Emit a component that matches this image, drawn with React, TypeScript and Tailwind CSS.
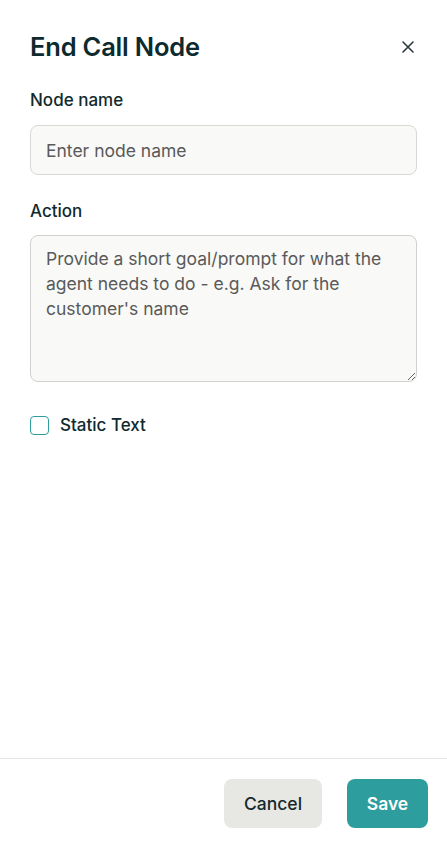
import React from "react";

export default function App() {
  return (
    <div
      className="h-[845px] w-[447px] bg-white flex flex-col text-[#0f2a2e]"
      style={{ fontFamily: "Inter, 'Noto Sans', sans-serif" }}
    >
      <div className="flex-1 px-[30px] pt-[31px]">
        <div className="flex items-center justify-between">
          <h1 className="text-[25.5px] leading-[32px] font-semibold tracking-[-0.2px] text-[#0d2a2e]">End Call Node</h1>
          <button className="mr-[2px] text-[#2a3a3c]">
            <svg width="14" height="14" viewBox="0 0 14 14" fill="none" stroke="currentColor" strokeWidth="1.6" strokeLinecap="round">
              <path d="M2 2 L12 12 M12 2 L2 12" />
            </svg>
          </button>
        </div>

        <label className="block mt-[25px] text-[17px] leading-[24px] font-medium">Node name</label>
        <input
          placeholder="Enter node name"
          className="mt-[13px] w-full h-[50px] rounded-[8px] border border-[#d8d8d4] bg-[#f9f9f7] px-[15px] text-[17.5px] placeholder:text-[#5a5a5a] outline-none"
        />

        <label className="block mt-[24px] text-[17px] leading-[24px] font-medium">Action</label>
        <textarea
          placeholder="Provide a short goal/prompt for what the agent needs to do - e.g. Ask for the customer's name"
          className="mt-[12px] w-full h-[147px] rounded-[8px] border border-[#d0d0cc] bg-[#f9f9f7] px-[15px] py-[10px] text-[17.5px] leading-[25px] placeholder:text-[#5a5a5a] outline-none resize-y block"
        />

        <div className="mt-[31px] flex items-center gap-[11px]">
          <span className="w-[19px] h-[19px] rounded-[4px] border-[1.5px] border-[#2d9d9d] bg-white" />
          <span className="text-[17px] leading-[24px] font-medium">Static Text</span>
        </div>
      </div>

      <div className="border-t border-[#e6e6e3] pt-[20px] pb-[17px] pr-[19px] flex justify-end gap-[25px]">
        <button className="h-[49px] w-[98px] pt-[2px] rounded-[8px] bg-[#e7e7e3] text-[17.5px] font-medium text-[#15292c]">Cancel</button>
        <button className="h-[49px] w-[81px] pt-[2px] rounded-[8px] bg-[#2d9d9d] text-[17.5px] font-semibold text-white">Save</button>
      </div>
    </div>
  );
}
